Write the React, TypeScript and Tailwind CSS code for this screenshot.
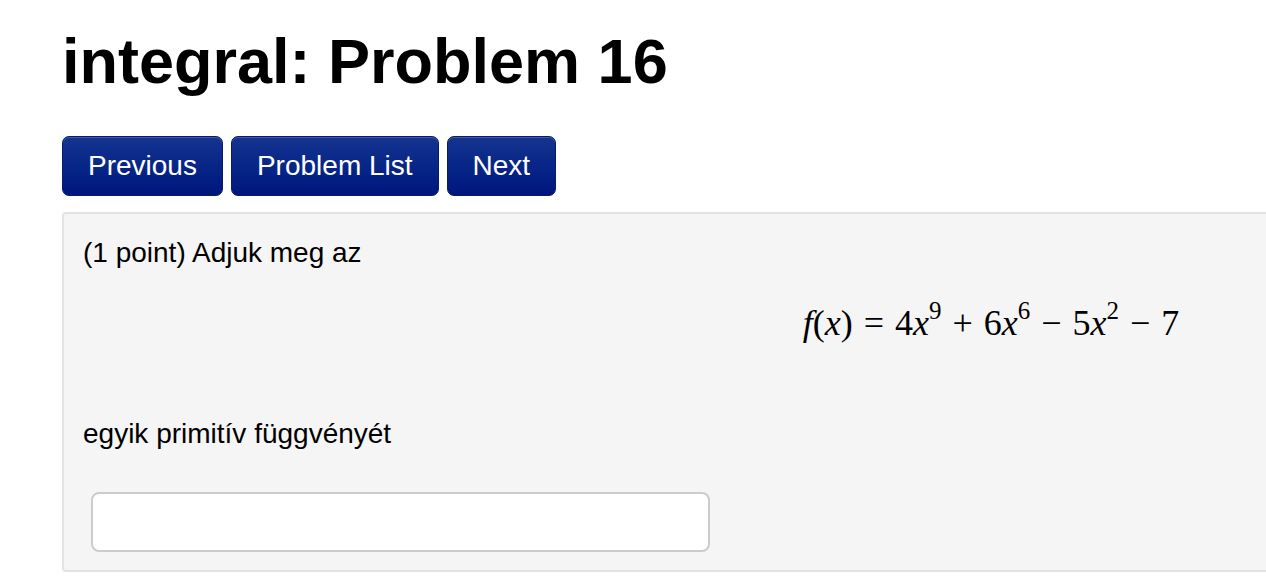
const sans = { fontFamily: '"Liberation Sans", Arial, Helvetica, sans-serif' }

function NavButton({ label }: { label: string }) {
  return (
    <button
      type="button"
      className="flex h-[60px] items-center rounded-[7px] border border-[#0a1a66] bg-gradient-to-b from-[#15338f] to-[#00157f] px-[25px] text-[28px] text-white shadow-[inset_0_1px_0_rgba(255,255,255,0.2)]"
    >
      {label}
    </button>
  )
}

function MathLine() {
  const it = 'italic'
  const sup = 'text-[25px] top-[-0.65em]'
  return (
    <div
      className="flex justify-center text-[36px] leading-[40px] text-black"
      style={{ fontFamily: '"Liberation Serif", "Times New Roman", serif' }}
    >
      <span className="whitespace-nowrap">
        <span className={it}>f</span>(<span className={it}>x</span>)
        <span className="mx-[11px]">=</span>
        4<span className={it}>x</span>
        <sup className={sup}>9</sup>
        <span className="mx-[11px]">+</span>
        6<span className={it}>x</span>
        <sup className={sup}>6</sup>
        <span className="mx-[11px]">−</span>
        5<span className={it}>x</span>
        <sup className={sup}>2</sup>
        <span className="mx-[11px]">−</span>
        7
      </span>
    </div>
  )
}

export default function App() {
  return (
    <div className="w-screen overflow-hidden bg-white pb-[12px] pl-[62px] text-black" style={sans}>
      <h1 className="mt-[30px] text-[63px] font-bold leading-[62px]">integral: Problem 16</h1>

      <div className="mt-[44px] flex gap-[8px]">
        <NavButton label="Previous" />
        <NavButton label="Problem List" />
        <NavButton label="Next" />
      </div>

      <div className="mt-[16px] w-[1858px] rounded-[4px] border-2 border-[#e3e3e3] bg-[#f5f5f5] px-[19px] pt-[19px] pb-[18px] text-[28px] leading-[40px]">
        <p>(1 point) Adjuk meg az</p>
        <div className="mt-[30px]">
          <MathLine />
        </div>
        <p className="mt-[71px]">egyik primitív függvényét</p>
        <input
          type="text"
          className="mt-[38px] ml-[8px] block h-[60px] w-[619px] rounded-[8px] border-2 border-[#cccccc] bg-white px-3 text-[26px] outline-none"
        />
      </div>
    </div>
  )
}
